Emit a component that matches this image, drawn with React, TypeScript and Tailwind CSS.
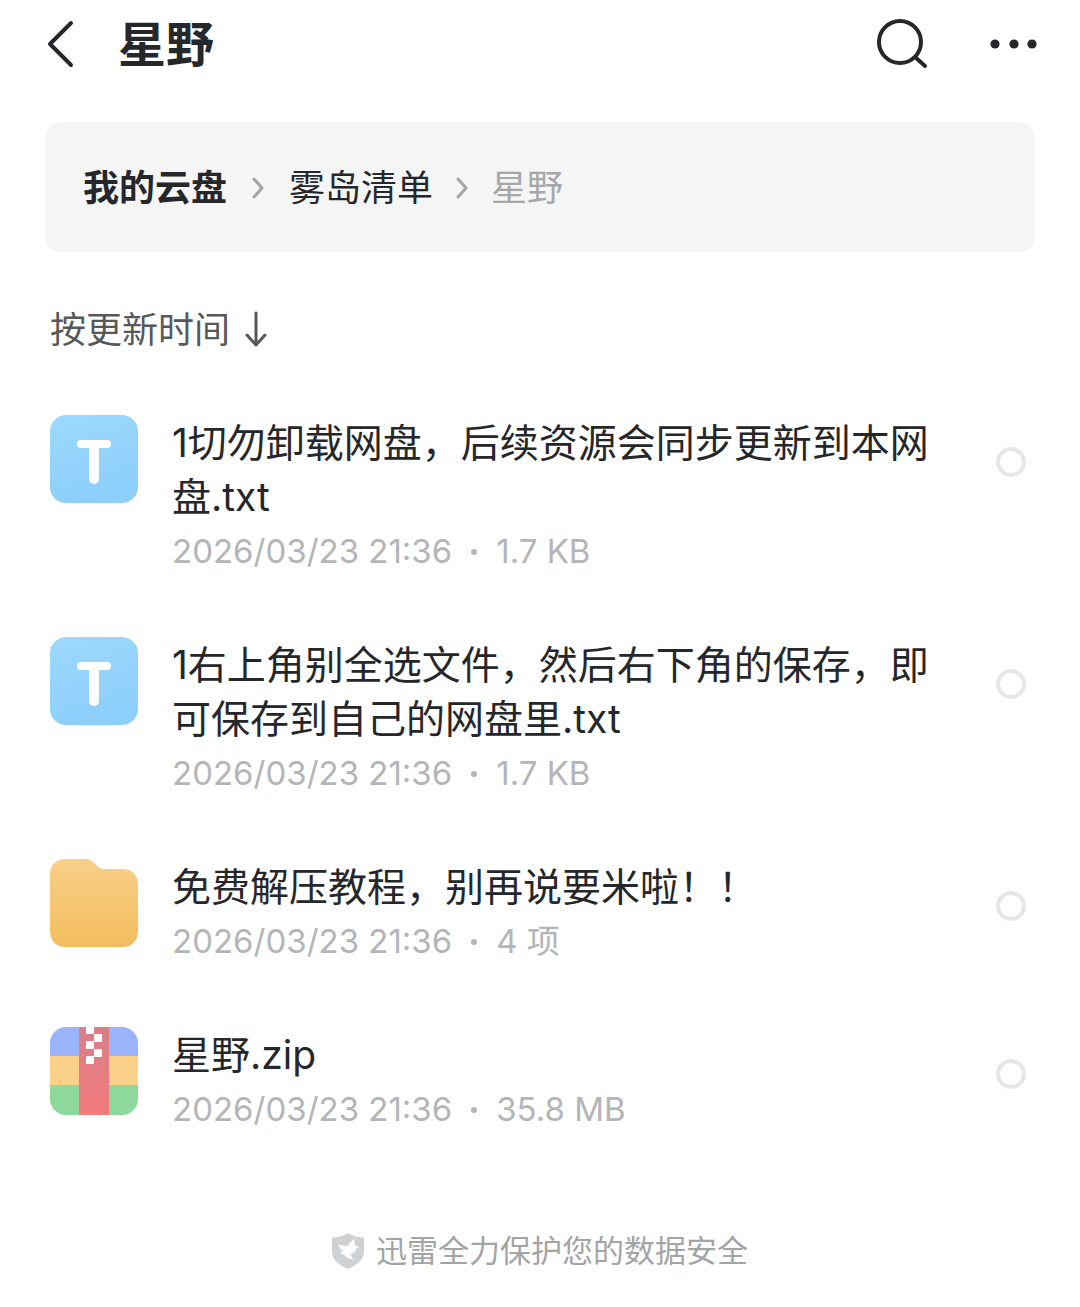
import { useState } from "react";

type FileKind = "text" | "folder" | "zip";

// Files of the current folder
const files: { name: string; date: string; info: string; kind: FileKind }[] = [
  {
    name: "1切勿卸载网盘，后续资源会同步更新到本网盘.txt",
    date: "2026/03/23 21:36",
    info: "1.7 KB",
    kind: "text",
  },
  {
    name: "1右上角别全选文件，然后右下角的保存，即可保存到自己的网盘里.txt",
    date: "2026/03/23 21:36",
    info: "1.7 KB",
    kind: "text",
  },
  {
    name: "免费解压教程，别再说要米啦！！",
    date: "2026/03/23 21:36",
    info: "4 项",
    kind: "folder",
  },
  {
    name: "星野.zip",
    date: "2026/03/23 21:36",
    info: "35.8 MB",
    kind: "zip",
  },
];

const TextIcon = () => (
  <svg viewBox="0 0 88 88" className="size-22 shrink-0" aria-hidden="true">
    <defs>
      <linearGradient id="textFill" x1="0" y1="0" x2="0.3" y2="1">
        <stop offset="0" stopColor="#9cd9fc" />
        <stop offset="1" stopColor="#8dcffb" />
      </linearGradient>
    </defs>
    <rect width="88" height="88" rx="16" fill="url(#textFill)" />
    <path d="M31 29H57" stroke="#fff" strokeLinecap="round" strokeWidth="8" />
    <path d="M44 30V64" stroke="#fff" strokeLinecap="round" strokeWidth="10" />
  </svg>
);

const FolderIcon = () => (
  <svg viewBox="0 0 88 88" className="size-22 shrink-0" aria-hidden="true">
    <defs>
      <linearGradient id="folderFill" x1="0" y1="0" x2="0" y2="1">
        <stop offset="0" stopColor="#f8cf88" />
        <stop offset="1" stopColor="#f3bd5e" />
      </linearGradient>
    </defs>
    <path
      d="M16 0H35C39 0 41 1 44 4L47 7C50 9.500 52 10 55 10H72C82 10 88 16 88 26V72C88 82 82 88 72 88H16C6 88 0 82 0 72V16C0 6 6 0 16 0Z"
      fill="url(#folderFill)"
    />
  </svg>
);

const ZipIcon = () => (
  <svg viewBox="0 0 88 88" className="size-22 shrink-0" aria-hidden="true">
    <defs>
      <linearGradient id="zipFill" x1="0" y1="0" x2="0" y2="1">
        <stop offset="0" stopColor="#d87f88" />
        <stop offset="1" stopColor="#f27a7b" />
      </linearGradient>
      <clipPath id="zipClip">
        <rect width="88" height="88" rx="16" />
      </clipPath>
    </defs>
    <g clipPath="url(#zipClip)">
      <rect width="88" height="30" fill="#9ab4fb" />
      <rect y="29" width="88" height="30" fill="#fbd189" />
      <rect y="58" width="88" height="30" fill="#8cd99b" />
      <rect x="29" width="30" height="88" fill="url(#zipFill)" />
      <g fill="#fff">
        <rect x="36" y="-1" width="8" height="8" rx="1" />
        <rect x="44" y="7" width="8" height="8" rx="1" />
        <rect x="36" y="14" width="8" height="8" rx="1" />
        <rect x="44" y="22" width="8" height="8" rx="1" />
        <rect x="36" y="29" width="8" height="8" rx="1" />
      </g>
    </g>
  </svg>
);

const icons = { text: TextIcon, folder: FolderIcon, zip: ZipIcon };

const Separator = () => (
  <svg viewBox="0 0 14 24" className="h-6 w-3.5 shrink-0" fill="none" aria-hidden="true">
    <path d="M3 3L11 12L3 21" stroke="#a3a4a6" strokeWidth="3" strokeLinecap="round" strokeLinejoin="round" />
  </svg>
);

const App = () => {
  const [selected, setSelected] = useState<string[]>([]);

  const toggle = (name: string) => {
    setSelected(
      selected.includes(name) ? selected.filter((item) => item !== name) : [...selected, name]
    );
  };

  return (
    <div className="min-h-screen bg-white font-['Inter','Noto_Sans_CJK_SC',sans-serif] text-[#26272a]">
      <header className="flex h-22 items-center pl-11 pr-10">
        <button aria-label="返回" className="shrink-0">
          <svg viewBox="0 0 32 52" className="h-13 w-8" fill="none" aria-hidden="true">
            <path d="M27 5L6 26L27 47" stroke="currentColor" strokeWidth="4" strokeLinecap="round" strokeLinejoin="round" />
          </svg>
        </button>
        <h1 className="ml-[42px] flex-1 pt-0.5 text-5xl font-bold">星野</h1>
        <button aria-label="搜索" className="shrink-0">
          <svg viewBox="0 0 56 56" className="size-14" fill="none" stroke="currentColor" aria-hidden="true">
            <circle cx="24" cy="26" r="21" strokeWidth="4" />
            <path d="M39 41L49 50" strokeWidth="4" strokeLinecap="round" />
          </svg>
        </button>
        <button aria-label="更多" className="ml-14 shrink-0">
          <svg viewBox="0 0 52 20" className="h-5 w-13" fill="currentColor" aria-hidden="true">
            <circle cx="7" cy="10" r="4.600" />
            <circle cx="26" cy="10" r="4.600" />
            <circle cx="44" cy="10" r="4.600" />
          </svg>
        </button>
      </header>

      <main>
        <nav
          aria-label="路径"
          className="mx-[45px] mt-[34px] flex h-[130px] items-center rounded-2xl bg-[#f5f5f6] px-[38px] pt-0.5 text-4xl"
        >
          <a href="#root" className="font-bold">我的云盘</a>
          <span className="px-6"><Separator /></span>
          <a href="#list">雾岛清单</a>
          <span className="px-[22px]"><Separator /></span>
          <span className="text-[#a6a7aa]" aria-current="page">星野</span>
        </nav>

        <button className="ml-[50px] mt-[51px] flex items-center gap-3.5 text-4xl leading-[54px] text-[#57585a]">
          按更新时间
          <svg viewBox="0 0 24 40" className="h-10 w-6" fill="none" stroke="currentColor" aria-hidden="true">
            <path d="M12 3V35M3 25L12 35L21 25" strokeWidth="3" strokeLinecap="round" strokeLinejoin="round" />
          </svg>
        </button>

        <ul className="mt-[58px] flex flex-col gap-15 pl-[50px] pr-[54px]">
          {files.map((file, index) => {
            const Icon = icons[file.kind];
            return (
              <li key={file.name} className="flex items-start">
                <Icon />
                <label htmlFor={`file-${index}`} className="ml-[34px] mr-10 min-w-0 flex-1 pt-px">
                  <span className="block break-all text-[39px] leading-[54px]">{file.name}</span>
                  <span className="mt-0.5 flex items-center text-[33px] leading-[51px] text-[#b4b5b7]">
                    {file.date}
                    <span className="mx-[19px] size-1.5 rounded-full bg-[#b4b5b7]" />
                    {file.info}
                  </span>
                </label>
                <input
                  id={`file-${index}`}
                  type="checkbox"
                  checked={selected.includes(file.name)}
                  onChange={() => toggle(file.name)}
                  className="mt-8 size-[30px] shrink-0 appearance-none rounded-full border-4 border-[#e6e6e7] checked:border-[#3f85ff] checked:bg-[#3f85ff]"
                />
              </li>
            );
          })}
        </ul>
      </main>

      <footer className="mt-[92px] flex items-center justify-center gap-3 text-[31px] leading-[48px] text-[#a3a4a6]">
        <svg viewBox="0 0 32 36" className="h-9 w-8" aria-hidden="true">
          <path d="M16 0C21 3 26 4 32 5V19C32 27 25 32 16 36C7 32 0 27 0 19V5C6 4 11 3 16 0Z" fill="#cfd2d4" />
          <path d="M6 11C10 13 13 13 16 13C17 10 19 8 23 6C22 8 22 10 23 12L27 14L24 16C24 18 22 20 19 21C19 23 20 25 22 27C17 26 14 24 12 22L8 20L11 18C8 16 7 14 6 11Z" fill="#fff" />
        </svg>
        迅雷全力保护您的数据安全
      </footer>
    </div>
  );
};

export default App;
